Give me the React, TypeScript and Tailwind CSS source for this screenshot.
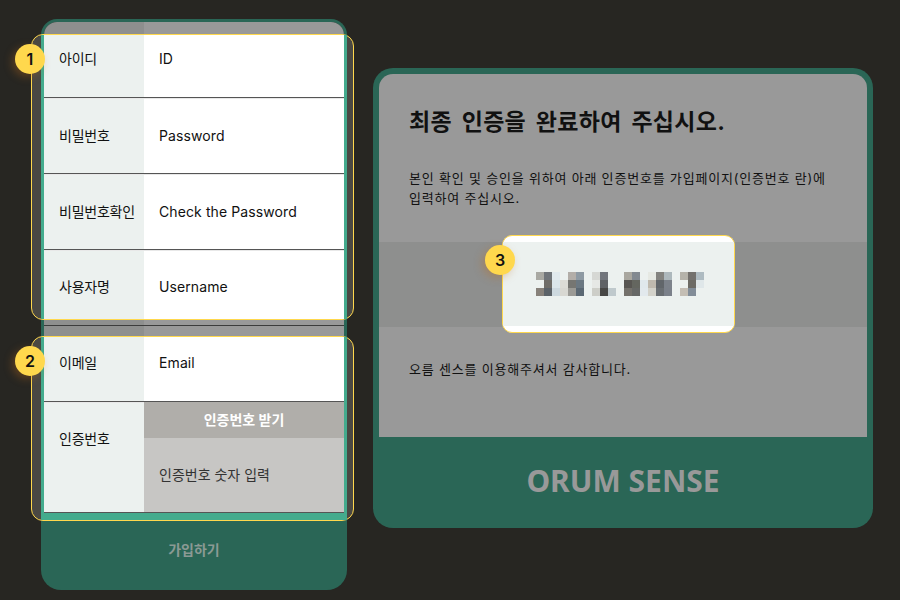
import React from 'react';

const FONT = "font-['Inter','Noto_Sans_CJK_KR',sans-serif]";

const MOSAIC: [number, number, string][] = [
  [0, 0, '#a9a9a3'], [1, 0, '#70757a'], [2, 0, '#e1eaee'], [4, 0, '#b3aea8'], [5, 0, '#8e9aa3'],
  [7, 0, '#d6d8d4'], [8, 0, '#72767c'],
  [11, 0, '#a9a79f'], [12, 0, '#828990'], [14, 0, '#e6e9e3'], [15, 0, '#83837f'], [16, 0, '#adb8bc'],
  [18, 0, '#b5b3aa'], [19, 0, '#73716d'], [20, 0, '#aebbc1'],
  [1, 1, '#6f6d68'], [2, 1, '#dbe6ea'], [3, 1, '#dcdcd6'], [4, 1, '#767672'], [5, 1, '#6b7882'],
  [7, 1, '#e6e8e5'], [8, 1, '#5f6265'],
  [11, 1, '#585652'], [12, 1, '#64665f'], [13, 1, '#e0e8ec'], [14, 1, '#bfb9ae'], [15, 1, '#61666a'], [16, 1, '#7c828a'],
  [19, 1, '#6d6b65'], [20, 1, '#dfe7e9'],
  [0, 2, '#87817a'], [1, 2, '#5b6268'], [2, 2, '#cdd9df'], [3, 2, '#d8d8d2'], [4, 2, '#9b9a95'], [5, 2, '#5b6873'],
  [7, 2, '#cdcec8'], [8, 2, '#474745'], [9, 2, '#bfc9cc'],
  [11, 2, '#74716b'], [12, 2, '#666866'], [13, 2, '#e2e9ed'], [14, 2, '#d3d2ca'], [15, 2, '#696e72'], [16, 2, '#7b818a'],
  [18, 2, '#c4beb4'], [19, 2, '#828d98'],
];

function Badge({ n, className }: { n: number; className: string }) {
  return (
    <div
      className={`absolute z-20 flex h-[30px] w-[30px] items-center justify-center rounded-full bg-[#ffd84d] text-[16px] font-semibold text-[#111] shadow-[-3px_3px_8px_rgba(190,110,30,0.35)] ${className}`}
    >
      {n}
    </div>
  );
}

function Row({ label, value, height, pad, last }: { label: string; value: string; height: string; pad: string; last?: boolean }) {
  return (
    <div className={`flex text-[14px] leading-5 text-[#111] ${height} ${last ? '' : 'border-b border-[#555]'}`}>
      <div className={`w-[100px] bg-[#ecf1ef] pl-[15px] tracking-[-0.25px] ${pad}`}>{label}</div>
      <div className={`flex-1 bg-white pl-[15px] tracking-[0.1px] ${pad}`}>{value}</div>
    </div>
  );
}

function Spot() {
  return <div className="absolute -top-px -bottom-px -left-[10px] -right-[7px] z-0 rounded-[12px] border border-[#ffd84d] bg-[#4a4843]" />;
}

export default function App() {
  return (
    <div className={`flex h-[600px] w-[900px] items-start gap-[26px] overflow-hidden bg-[#272622] pl-[41px] pt-[19px] ${FONT}`}>
      {/* signup form */}
      <div className="flex w-[306px] flex-col">
        <div className="flex h-[16px] overflow-hidden rounded-t-[20px] border-x-[3px] border-t-[3px] border-[#2a6656]">
          <div className="w-[100px] bg-[#8e8f8e]" />
          <div className="flex-1 bg-[#999]" />
        </div>

        <div className="relative">
          <Spot />
          <Badge n={1} className="-left-[26px] top-[9px]" />
          <div className="relative z-10 border-x-[3px] border-[#44ab8d]">
            <Row label="아이디" value="ID" height="h-[63px]" pad="pt-[14px]" />
            <Row label="비밀번호" value="Password" height="h-[76px]" pad="border-t border-[#e8e8e8] pt-[27px]" />
            <Row label="비밀번호확인" value="Check the Password" height="h-[76px]" pad="border-t border-[#e8e8e8] pt-[27px]" />
            <Row label="사용자명" value="Username" height="h-[69px]" pad="border-t border-[#e8e8e8] pt-[26px]" last />
          </div>
        </div>

        <div className="border-x-[3px] border-[#2a6656]">
          <div className="flex h-[7px] border-b border-[#3c3c3c]">
            <div className="w-[100px] bg-[#8e8f8e]" />
            <div className="flex-1 bg-[#999]" />
          </div>
          <div className="flex h-[11px]">
            <div className="w-[100px] bg-[#8e8f8e]" />
            <div className="flex-1 bg-[#999]" />
          </div>
        </div>

        <div className="relative">
          <Spot />
          <Badge n={2} className="-left-[26px] top-[9px]" />
          <div className="relative z-10 border-x-[3px] border-b-[7px] border-[#44ab8d]">
            <Row label="이메일" value="Email" height="h-[65px]" pad="pt-[16px]" />
            <div className="flex h-[111px] border-b border-[#555] text-[14px] leading-5 text-[#111]">
              <div className="w-[100px] border-t border-[#e8e8e8] bg-[#ecf1ef] pl-[15px] pt-[26px] tracking-[-0.25px]">인증번호</div>
              <div className="flex flex-1 flex-col">
                <div className="flex h-[36px] items-center justify-center bg-[#b0aeaa] font-bold text-white">인증번호 받기</div>
                <div className="flex flex-1 items-center bg-[#c7c6c4] pl-[15px] text-[#333]">인증번호 숫자 입력</div>
              </div>
            </div>
          </div>
        </div>

        <div className="flex h-[70px] items-center justify-center rounded-b-[20px] bg-[#2a6656] pb-[12px] text-[14px] font-bold text-[#8b9a94]">
          가입하기
        </div>
      </div>

      {/* verification mail preview */}
      <div className="mt-[49px] w-[500px] rounded-[20px] bg-[#2a6656] px-[6px] pt-[6px]">
        <div className="h-[363px] rounded-t-[14px] bg-[#999] text-[#111]">
          <h1 className="pl-[30px] pt-[32px] text-[23px] font-bold leading-8 tracking-[0.3px] [word-spacing:4px]">최종 인증을 완료하여 주십시오.</h1>
          <p className="mt-[30px] px-[30px] text-[13px] leading-5 tracking-[0.8px]">
            본인 확인 및 승인을 위하여 아래 인증번호를 가입페이지(인증번호 란)에
            <br />
            입력하여 주십시오.
          </p>
          <div className="mt-[34px] h-[85px] bg-[#8e8f8e] pl-[123px]">
            <div className="relative -top-[7px] flex h-[98px] w-[233px] flex-col justify-center rounded-[10px] border border-[#ffd84d] bg-white">
              <Badge n={3} className="-left-[18px] top-[9px]" />
              <div className="flex h-[84px] items-center bg-[#ecf1ef] pl-[33px]">
                <svg width="168" height="24" viewBox="0 0 168 24" shapeRendering="crispEdges">
                  {MOSAIC.map(([x, y, fill]) => (
                    <rect key={`${x}-${y}`} x={x * 8} y={y * 8} width="8" height="8" fill={fill} />
                  ))}
                </svg>
              </div>
            </div>
          </div>
          <p className="mt-[32px] pl-[30px] text-[13px] leading-5 tracking-[0.8px]">오름 센스를 이용해주셔서 감사합니다.</p>
        </div>
        <div className="flex h-[91px] items-center justify-center pb-[4px] font-['Noto_Sans',sans-serif] text-[30px] font-bold text-[#999]">
          ORUM SENSE
        </div>
      </div>
    </div>
  );
}
